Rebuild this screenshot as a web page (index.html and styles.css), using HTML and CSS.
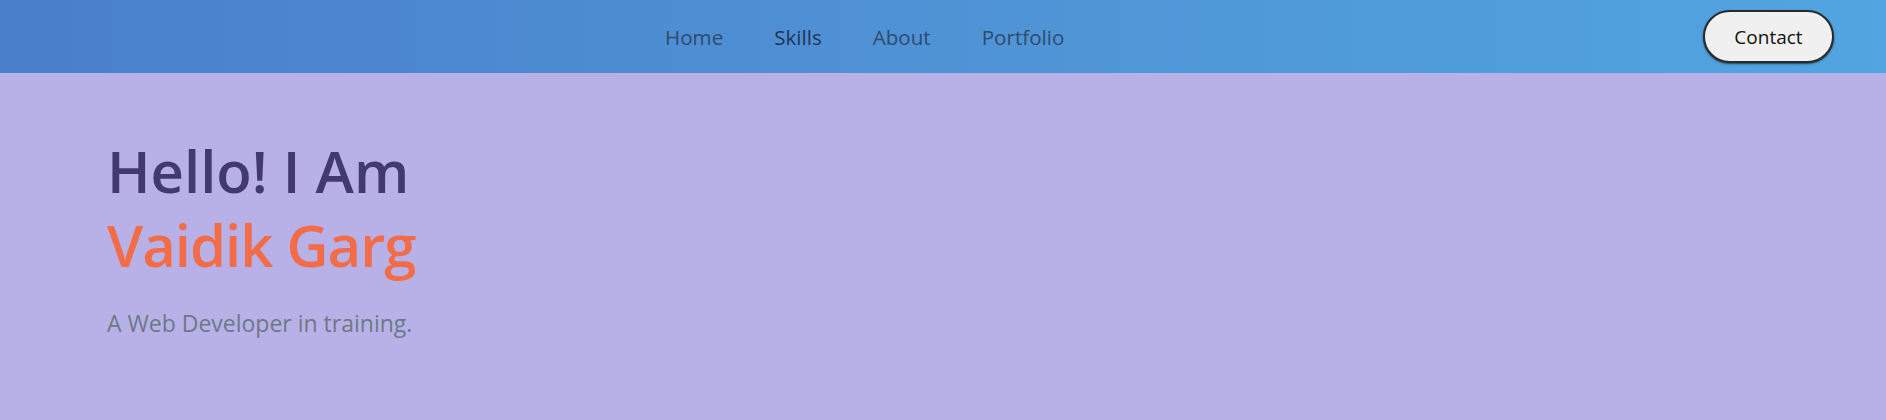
FILE: index.html
```html
<!DOCTYPE html>
<html lang="en">
<head>
<meta charset="utf-8">
<title>Vaidik Garg</title>
<link rel="stylesheet" href="styles.css">
</head>
<body>
<header class="topbar">
  <nav class="nav">
    <a class="nav-link" href="#">Home</a>
    <a class="nav-link nav-link-active" href="#">Skills</a>
    <a class="nav-link" href="#">About</a>
    <a class="nav-link" href="#">Portfolio</a>
  </nav>
  <button class="contact-btn" type="button">Contact</button>
</header>
<main class="hero">
  <h1 class="hero-title">
    <span class="hero-hello">Hello! I Am</span>
    <span class="hero-name">Vaidik Garg</span>
  </h1>
  <p class="hero-sub">A Web Developer in training.</p>
</main>
</body>
</html>
```

FILE: styles.css
```css
* { box-sizing: border-box; }
html, body {
  margin: 0;
  padding: 0;
}
body {
  background: #b8b1e8;
  font-family: "Open Sans", "Noto Sans", sans-serif;
  min-height: 420px;
}
.topbar {
  height: 73px;
  display: flex;
  align-items: center;
  padding: 0 52px 0 665px;
  background: linear-gradient(90deg, #4a7fca 0%, #4f93d5 50%, #51a5e0 100%);
}
.nav {
  display: flex;
  gap: 51px;
  align-items: center;
}
.nav-link {
  color: #2f4a6f;
  text-decoration: none;
  font-size: 20.6px;
  line-height: 28px;
}
.nav-link-active {
  color: #1f3555;
}
.contact-btn {
  margin-left: auto;
  width: 131px;
  height: 53px;
  border: 2px solid #2a2a2a;
  border-radius: 27px;
  background: #f0f0f0;
  box-shadow: 0 1px 2px rgba(0,0,0,0.6);
  font-family: "Open Sans", "Noto Sans", sans-serif;
  font-size: 19px;
  color: #111;
  padding: 0;
}
.hero {
  padding: 61px 0 0 107px;
}
.hero-title {
  margin: 0;
  font-size: 58px;
  font-weight: 600;
  line-height: 74px;
}
.hero-hello {
  display: block;
  color: #423a6f;
}
.hero-name {
  display: block;
  color: #f36c48;
  letter-spacing: -1px;
}
.hero-sub {
  margin: 25px 0 0;
  font-size: 23px;
  color: #6c7985;
}
```
